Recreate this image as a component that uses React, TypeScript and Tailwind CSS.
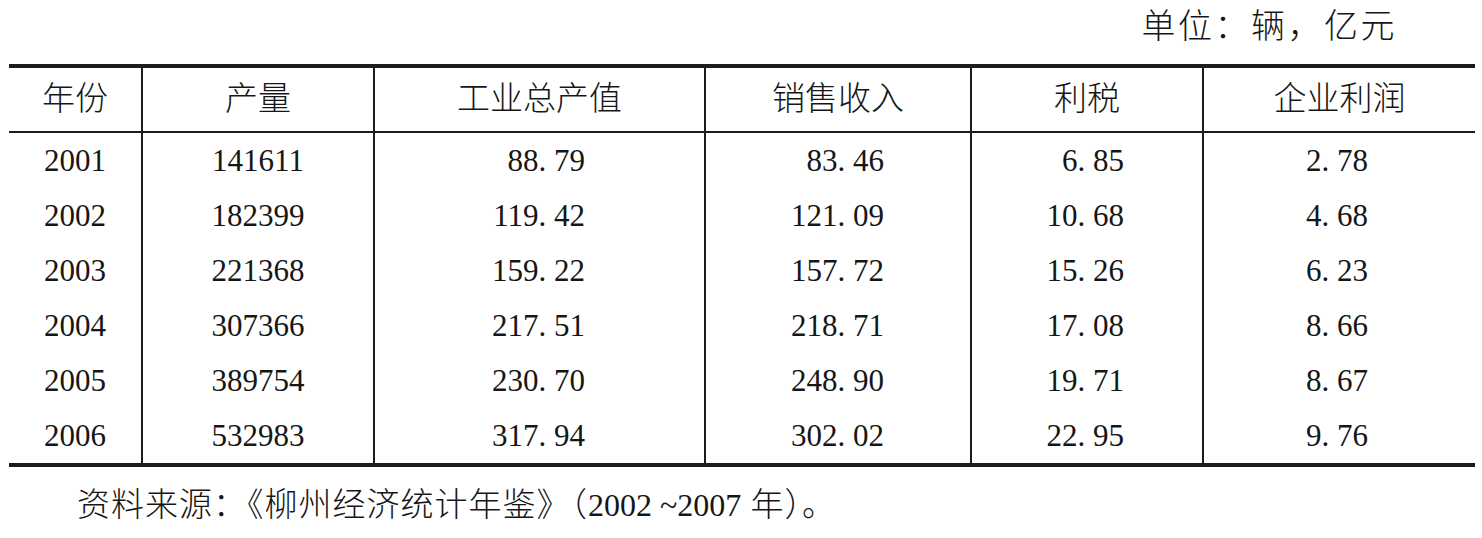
import React from "react";

const rows: string[][] = [
  ["2001", "141611", "88. 79", "83. 46", "6. 85", "2. 78"],
  ["2002", "182399", "119. 42", "121. 09", "10. 68", "4. 68"],
  ["2003", "221368", "159. 22", "157. 72", "15. 26", "6. 23"],
  ["2004", "307366", "217. 51", "218. 71", "17. 08", "8. 66"],
  ["2005", "389754", "230. 70", "248. 90", "19. 71", "8. 67"],
  ["2006", "532983", "317. 94", "302. 02", "22. 95", "9. 76"],
];

const headers = ["年份", "产量", "工业总产值", "销售收入", "利税", "企业利润"];

const bodyCell = [
  "flex items-center justify-center",
  "flex items-center justify-center border-l-2 border-[#1c1c1c]",
  "flex items-center justify-end pr-[119px] border-l-2 border-[#1c1c1c]",
  "flex items-center justify-end pr-[86px] border-l-2 border-[#1c1c1c]",
  "flex items-center justify-end pr-[78px] border-l-2 border-[#1c1c1c]",
  "flex items-center justify-end pr-[107px] border-l-2 border-[#1c1c1c]",
];

const headCell = [
  "flex items-center justify-center",
  "flex items-center justify-center border-l-2 border-[#1c1c1c]",
  "flex items-center justify-center border-l-2 border-[#1c1c1c]",
  "flex items-center justify-center border-l-2 border-[#1c1c1c]",
  "flex items-center justify-center border-l-2 border-[#1c1c1c]",
  "flex items-center justify-center border-l-2 border-[#1c1c1c]",
];

export default function App() {
  return (
    <div
      className="w-[1482px] h-[538px] bg-white text-[#161616] overflow-hidden"
      style={{ fontFamily: '"Liberation Serif", "Noto Sans CJK SC", serif' }}
    >
      <div className="h-[64px] pt-[10px] pr-[85px] text-right text-[34px] leading-[34px] tracking-[2.5px] font-light">
        单位：辆，亿元
      </div>
      <div className="ml-[9px] w-[1466px] border-t-4 border-b-4 border-[#1c1c1c]">
        <div className="grid grid-cols-[132px_232px_331px_266px_232px_273px] h-[65px] border-b-2 border-[#1c1c1c] text-[33px] leading-[33px] font-light">
          {headers.map((h, i) => (
            <div key={i} className={headCell[i]}>
              {h}
            </div>
          ))}
        </div>
        {rows.map((r, ri) => (
          <div
            key={ri}
            className="grid grid-cols-[132px_232px_331px_266px_232px_273px] h-[55px] text-[31px] leading-[31px]"
          >
            {r.map((c, ci) => (
              <div key={ci} className={bodyCell[ci]}>
                <span className="whitespace-pre">{c}</span>
              </div>
            ))}
          </div>
        ))}
      </div>
      <p className="mt-[22px] pl-[77px] text-[33px] leading-[33px] tracking-[1px] whitespace-pre font-light">
        资料来源：《柳州经济统计年鉴》（<span className="tracking-normal text-[32px]">2002 ~2007</span> 年）。
      </p>
    </div>
  );
}
